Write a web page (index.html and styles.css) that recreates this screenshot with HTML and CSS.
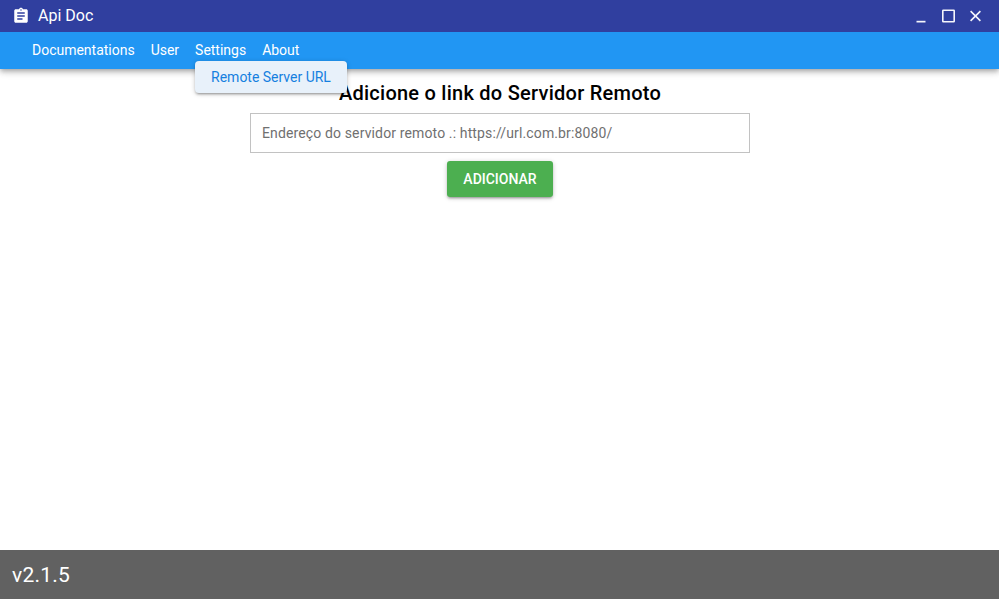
FILE: index.html
```html
<!DOCTYPE html>
<html lang="pt-br">
<head>
    <meta charset="UTF-8">
    <meta name="viewport" content="width=device-width, initial-scale=1.0">
    <title>Api Doc</title>
    <link rel="stylesheet" href="styles.css">
</head>
<body>
    <header class="header">
        <!-- Window bar -->
        <div class="title-bar">
            <svg class="icon" viewBox="0 0 24 24"><path d="M19 3h-4.180C14.400 1.840 13.300 1 12 1c-1.300 0-2.400.840-2.820 2H5c-1.100 0-2 .9-2 2v14c0 1.100.9 2 2 2h14c1.100 0 2-.9 2-2V5c0-1.100-.9-2-2-2zm-7 0c.55 0 1 .45 1 1s-.45 1-1 1-1-.45-1-1 .45-1 1-1zm2 14H7v-2h7v2zm3-4H7v-2h10v2zm0-4H7V7h10v2z"/></svg>
            <div class="app-name">Api Doc</div>
            <div class="window-buttons">
                <button class="window-btn" aria-label="Minimize"><svg class="icon" viewBox="0 0 18 18"><path d="M4.500 13.800h9v1.700h-9z"/></svg></button>
                <button class="window-btn" aria-label="Maximize"><svg class="icon line" viewBox="0 0 18 18"><rect x="3.800" y="3.300" width="11.400" height="11.400" rx="0.5"/></svg></button>
                <button class="window-btn" aria-label="Close"><svg class="icon line" viewBox="0 0 18 18"><path d="M4.600 4.100l9.800 9.800M14.400 4.100l-9.800 9.800"/></svg></button>
            </div>
        </div>

        <!-- Menu -->
        <nav class="menu-bar">
            <div class="menu-item">Documentations</div>
            <div class="menu-item">User</div>
            <div class="menu-item">Settings
                <div class="submenu">Remote Server URL</div>
            </div>
            <div class="menu-item">About</div>
        </nav>
    </header>

    <main class="content">
        <form class="server-form">
            <h1>Adicione o link do Servidor Remoto</h1>
            <input type="text" placeholder="Endereço do servidor remoto .: https://url.com.br:8080/">
            <button type="button" class="btn-add">Adicionar</button>
        </form>
    </main>

    <footer class="footer">v2.1.5</footer>
</body>
</html>
```
FILE: styles.css
```css
* {
    box-sizing: border-box;
}
body {
    font-family: Roboto, "Liberation Sans", sans-serif;
    font-size: 14px;
    line-height: 1.5;
    margin: 0;
    height: 100vh;
    display: flex;
    flex-direction: column;
    overflow: hidden;
    background: #fff;
    color: #000;
}
.header {
    position: relative;
    z-index: 1;
    color: #fff;
    box-shadow: 0 2px 4px -1px rgba(0, 0, 0, 0.2), 0 4px 5px rgba(0, 0, 0, 0.14), 0 1px 10px rgba(0, 0, 0, 0.12);
}
.title-bar {
    display: flex;
    align-items: center;
    height: 32px;
    padding: 0 12px;
    background: #303f9f;
    font-size: 16px;
}
.icon {
    display: block;
    width: 18px;
    height: 18px;
    fill: currentColor;
}
.icon.line {
    fill: none;
    stroke: currentColor;
    stroke-width: 1.6;
}
.app-name {
    flex: 1;
    margin-left: 8px;
}
.window-buttons {
    display: flex;
    gap: 3px;
}
.window-btn {
    display: flex;
    justify-content: center;
    width: 24px;
    padding: 0;
    border: none;
    background: none;
    color: #f5f6fb;
}
.menu-bar {
    display: flex;
    height: 37px;
    padding: 8px 24px;
    background: #2196f3;
}
.menu-item {
    position: relative;
    padding: 0 8px;
    line-height: 21px;
    letter-spacing: -0.01px;
}
.submenu {
    position: absolute;
    top: 21px;
    left: 8px;
    padding: 0 16px;
    border-radius: 4px;
    background: #e8f1fa;
    color: #1580e0;
    line-height: 32px;
    white-space: nowrap;
    box-shadow: 0 1px 5px rgba(0, 0, 0, 0.2), 0 2px 2px rgba(0, 0, 0, 0.14), 0 3px 1px -2px rgba(0, 0, 0, 0.12);
}
.content {
    flex: 1;
    padding-left: 1px;
}
.server-form {
    display: flex;
    flex-direction: column;
    align-items: center;
    gap: 8px;
    width: 500px;
    margin: 0 auto;
    padding-top: 8px;
}
.server-form h1 {
    margin: 0;
    font-size: 20px;
    font-weight: 500;
    line-height: 32px;
    letter-spacing: 0.0125em;
    margin-bottom: -4px;
}
.server-form input {
    width: 100%;
    height: 40px;
    padding: 0 11px;
    border: 1px solid #c2c2c2;
    font: inherit;
    letter-spacing: 0.00937em;
}
.server-form input::placeholder {
    color: #707070;
}
.btn-add {
    width: 106px;
    height: 36px;
    padding: 0 16px;
    border: none;
    border-radius: 3px;
    background: #4caf50;
    color: #fff;
    font: inherit;
    font-weight: 500;
    text-transform: uppercase;
    box-shadow: 0 1px 5px rgba(0, 0, 0, 0.2), 0 2px 2px rgba(0, 0, 0, 0.14), 0 3px 1px -2px rgba(0, 0, 0, 0.12);
}
.footer {
    height: 49px;
    padding: 0 12px;
    background: #616161;
    color: #fff;
    font-size: 21px;
    line-height: 50px;
    letter-spacing: 0.01em;
}
```
